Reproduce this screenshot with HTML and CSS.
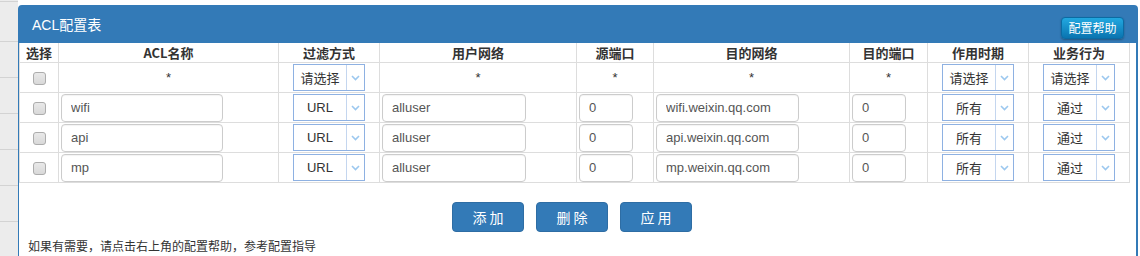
FILE: index.html
```html
<!DOCTYPE html>
<html lang="zh-CN">
<head>
    <meta charset="UTF-8">
    <title>ACL配置表</title>
    <link rel="stylesheet" href="styles.css">
</head>
<body>
    <div class="side"></div>

    <div class="panel">
        <div class="panel-head">
            <span class="panel-title">ACL配置表</span>
            <button class="btn-help">配置帮助</button>
        </div>

        <table class="acl">
            <colgroup>
                <col style="width: 39px">
                <col style="width: 220px">
                <col style="width: 101px">
                <col style="width: 197px">
                <col style="width: 77px">
                <col style="width: 196px">
                <col style="width: 78px">
                <col style="width: 101px">
                <col style="width: 101px">
            </colgroup>
            <tr class="head-row">
                <th>选择</th>
                <th>ACL名称</th>
                <th>过滤方式</th>
                <th>用户网络</th>
                <th>源端口</th>
                <th>目的网络</th>
                <th>目的端口</th>
                <th>作用时期</th>
                <th>业务行为</th>
            </tr>
            <!-- 过滤行 -->
            <tr>
                <td><input type="checkbox" class="chk"></td>
                <td>*</td>
                <td><div class="sel"><span class="sel-text">请选择</span><span class="sel-arrow"><svg width="9" height="6" viewBox="0 0 9 6"><path d="M1 1 L4.5 4.5 L8 1" fill="none" stroke="#9cc8ef" stroke-width="1.6"/></svg></span></div></td>
                <td>*</td>
                <td>*</td>
                <td>*</td>
                <td>*</td>
                <td><div class="sel"><span class="sel-text">请选择</span><span class="sel-arrow"><svg width="9" height="6" viewBox="0 0 9 6"><path d="M1 1 L4.5 4.5 L8 1" fill="none" stroke="#9cc8ef" stroke-width="1.6"/></svg></span></div></td>
                <td><div class="sel"><span class="sel-text">请选择</span><span class="sel-arrow"><svg width="9" height="6" viewBox="0 0 9 6"><path d="M1 1 L4.5 4.5 L8 1" fill="none" stroke="#9cc8ef" stroke-width="1.6"/></svg></span></div></td>
            </tr>
            <tr>
                <td><input type="checkbox" class="chk"></td>
                <td class="left"><input class="inp w-name" value="wifi"></td>
                <td><div class="sel"><span class="sel-text">URL</span><span class="sel-arrow"><svg width="9" height="6" viewBox="0 0 9 6"><path d="M1 1 L4.5 4.5 L8 1" fill="none" stroke="#9cc8ef" stroke-width="1.6"/></svg></span></div></td>
                <td class="left"><input class="inp w-user" value="alluser"></td>
                <td class="left"><input class="inp w-port" value="0"></td>
                <td class="left"><input class="inp w-net" value="wifi.weixin.qq.com"></td>
                <td class="left"><input class="inp w-port" value="0"></td>
                <td><div class="sel"><span class="sel-text">所有</span><span class="sel-arrow"><svg width="9" height="6" viewBox="0 0 9 6"><path d="M1 1 L4.5 4.5 L8 1" fill="none" stroke="#9cc8ef" stroke-width="1.6"/></svg></span></div></td>
                <td><div class="sel"><span class="sel-text">通过</span><span class="sel-arrow"><svg width="9" height="6" viewBox="0 0 9 6"><path d="M1 1 L4.5 4.5 L8 1" fill="none" stroke="#9cc8ef" stroke-width="1.6"/></svg></span></div></td>
            </tr>
            <tr>
                <td><input type="checkbox" class="chk"></td>
                <td class="left"><input class="inp w-name" value="api"></td>
                <td><div class="sel"><span class="sel-text">URL</span><span class="sel-arrow"><svg width="9" height="6" viewBox="0 0 9 6"><path d="M1 1 L4.5 4.5 L8 1" fill="none" stroke="#9cc8ef" stroke-width="1.6"/></svg></span></div></td>
                <td class="left"><input class="inp w-user" value="alluser"></td>
                <td class="left"><input class="inp w-port" value="0"></td>
                <td class="left"><input class="inp w-net" value="api.weixin.qq.com"></td>
                <td class="left"><input class="inp w-port" value="0"></td>
                <td><div class="sel"><span class="sel-text">所有</span><span class="sel-arrow"><svg width="9" height="6" viewBox="0 0 9 6"><path d="M1 1 L4.5 4.5 L8 1" fill="none" stroke="#9cc8ef" stroke-width="1.6"/></svg></span></div></td>
                <td><div class="sel"><span class="sel-text">通过</span><span class="sel-arrow"><svg width="9" height="6" viewBox="0 0 9 6"><path d="M1 1 L4.5 4.5 L8 1" fill="none" stroke="#9cc8ef" stroke-width="1.6"/></svg></span></div></td>
            </tr>
            <tr>
                <td><input type="checkbox" class="chk"></td>
                <td class="left"><input class="inp w-name" value="mp"></td>
                <td><div class="sel"><span class="sel-text">URL</span><span class="sel-arrow"><svg width="9" height="6" viewBox="0 0 9 6"><path d="M1 1 L4.5 4.5 L8 1" fill="none" stroke="#9cc8ef" stroke-width="1.6"/></svg></span></div></td>
                <td class="left"><input class="inp w-user" value="alluser"></td>
                <td class="left"><input class="inp w-port" value="0"></td>
                <td class="left"><input class="inp w-net" value="mp.weixin.qq.com"></td>
                <td class="left"><input class="inp w-port" value="0"></td>
                <td><div class="sel"><span class="sel-text">所有</span><span class="sel-arrow"><svg width="9" height="6" viewBox="0 0 9 6"><path d="M1 1 L4.5 4.5 L8 1" fill="none" stroke="#9cc8ef" stroke-width="1.6"/></svg></span></div></td>
                <td><div class="sel"><span class="sel-text">通过</span><span class="sel-arrow"><svg width="9" height="6" viewBox="0 0 9 6"><path d="M1 1 L4.5 4.5 L8 1" fill="none" stroke="#9cc8ef" stroke-width="1.6"/></svg></span></div></td>
            </tr>
        </table>

        <!-- 操作按钮 -->
        <div class="actions">
            <button class="btn">添 加</button>
            <button class="btn">删 除</button>
            <button class="btn">应 用</button>
        </div>

        <p class="tip">如果有需要，请点击右上角的配置帮助，参考配置指导</p>
    </div>
</body>
</html>
```

FILE: styles.css
```css
body {
    margin: 0;
    display: flex;
    align-items: flex-start;
    font-family: "Liberation Sans", "Noto Sans CJK SC", sans-serif;
    color: #333;
    background-color: #fff;
    overflow: hidden;
}

/* 左侧菜单边栏 */
.side {
    width: 18px;
    height: 256px;
    flex: none;
    background-color: #ececec;
    background-image: repeating-linear-gradient(to bottom, transparent 0, transparent 35px, #d3d3d3 35px, #d3d3d3 36px);
    background-position: 0 6px;
}

.panel {
    margin-top: 5px;
    width: 1117px;
    height: 260px;
    flex: none;
    border: 1px solid #337ab7;
    border-right-width: 2px;
    border-radius: 4px 4px 0 0;
    background-color: #fff;
}

.panel-head {
    height: 37px;
    background-color: #337ab7;
    padding: 0 12px 0 13px;
    display: flex;
    justify-content: space-between;
    align-items: center;
}

.panel-title {
    color: #fff;
    font-size: 14px;
    margin-top: -1px;
}

.btn-help {
    margin-top: 6px;
    height: 22px;
    width: 63px;
    padding: 0;
    font-family: "Noto Sans CJK SC", sans-serif;
    font-size: 12px;
    color: #fff;
    background: linear-gradient(to bottom, #22a8e0, #0a74b0);
    border: 1px solid #0b6ba3;
    border-radius: 4px;
    box-shadow: 0 1px 2px rgba(0, 0, 0, 0.3);
}

.acl {
    width: 1111px;
    table-layout: fixed;
    border-collapse: collapse;
}

.acl th, .acl td {
    border: 1px solid #ddd;
    padding: 0 2px;
    text-align: center;
    vertical-align: middle;
    font-size: 13px;
}

.acl tr:first-child th {
    border-top: none;
}

.acl th {
    height: 19px;
    font-weight: bold;
    font-family: "Noto Sans CJK SC", sans-serif;
    color: #333;
    line-height: 18px;
}

.acl td {
    height: 29px;
}

.acl td.left {
    text-align: left;
}

.chk {
    appearance: none;
    width: 13px;
    height: 13px;
    margin: 0;
    vertical-align: middle;
    background: linear-gradient(to bottom, #e9e9e9, #d9d9d9);
    border: 1px solid #adadad;
    border-radius: 3px;
}

.inp {
    box-sizing: border-box;
    height: 28px;
    padding: 0 9px;
    border: 1px solid #ccc;
    border-radius: 4px;
    font-family: "Liberation Sans", sans-serif;
    font-size: 13px;
    color: #555;
    vertical-align: middle;
    box-shadow: inset 0 1px 1px rgba(0, 0, 0, 0.05);
}

.w-name { width: 162px; }
.w-user { width: 144px; }
.w-port { width: 54px; }
.w-net { width: 143px; }

/* 下拉框 */
.sel {
    display: inline-flex;
    box-sizing: border-box;
    width: 72px;
    height: 27px;
    border: 1px solid #8eb1e2;
    vertical-align: middle;
    background-color: #fff;
}

.sel-text {
    flex: 1;
    display: flex;
    align-items: center;
    justify-content: center;
    font-family: "Liberation Sans", "Noto Sans CJK SC", sans-serif;
    font-size: 13px;
    color: #333;
}

.sel-arrow {
    width: 17px;
    border-left: 1px solid #c4d6ef;
    display: flex;
    align-items: center;
    justify-content: center;
    padding-top: 1px;
}

.actions {
    display: flex;
    justify-content: center;
    gap: 12px;
    width: 1106px;
    padding-right: 5px;
    margin-top: 19px;
}

.btn {
    width: 72px;
    height: 30px;
    padding: 0;
    font-family: "Noto Sans CJK SC", sans-serif;
    font-size: 14px;
    color: #fff;
    background-color: #337ab7;
    border: 1px solid #2e6da4;
    border-radius: 4px;
}

.tip {
    margin: 5px 0 0 9px;
    font-size: 12px;
    font-family: "Noto Sans CJK SC", sans-serif;
    color: #333;
}
```
